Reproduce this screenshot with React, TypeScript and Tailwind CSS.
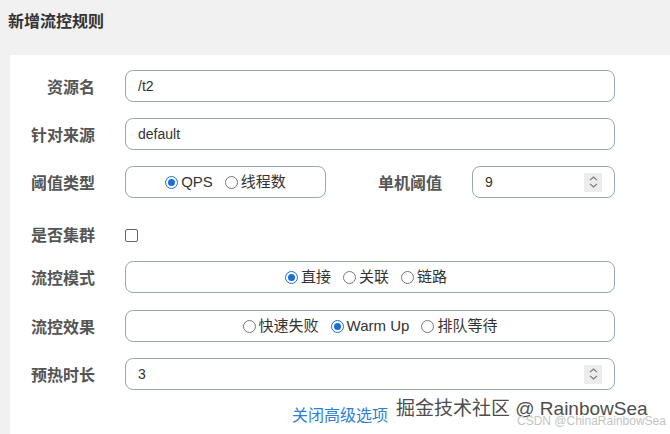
import React from 'react'

const font = { fontFamily: '"Liberation Sans", "Noto Sans CJK SC", sans-serif' }

function Label({ children, className = '' }: { children: React.ReactNode; className?: string }) {
  return (
    <div className={`text-right text-[16px] font-bold text-[#555] leading-none pt-[4px] ${className}`}>{children}</div>
  )
}

function Radio({ checked, label }: { checked?: boolean; label: string }) {
  return (
    <label className="flex items-center gap-[3px]">
      {checked ? (
        <span className="w-[13px] h-[13px] rounded-full border-[1.5px] border-[#1a6fd6] flex items-center justify-center">
          <span className="w-[7px] h-[7px] rounded-full bg-[#1a6fd6]" />
        </span>
      ) : (
        <span className="w-[13px] h-[13px] rounded-full border-[1.5px] border-[#777]" />
      )}
      <span className="text-[15px] text-[#333]">{label}</span>
    </label>
  )
}

function Spinner() {
  return (
    <div className="w-[18px] h-[19px] bg-[#ececec] flex flex-col items-center justify-center gap-[2px]">
      <svg width="9" height="5" viewBox="0 0 9 5" fill="none">
        <path d="M1 4.2 L4.5 1 L8 4.2" stroke="#777" strokeWidth="1.1" />
      </svg>
      <svg width="9" height="5" viewBox="0 0 9 5" fill="none">
        <path d="M1 0.8 L4.5 4 L8 0.8" stroke="#777" strokeWidth="1.1" />
      </svg>
    </div>
  )
}

const box = 'h-8 rounded-[8px] border border-[#93a9b4] bg-white'

export default function App() {
  return (
    <div className="relative w-[670px] h-[434px] overflow-hidden bg-[#f1f1f1]" style={font}>
      {/* Header */}
      <div className="h-[55px] flex items-start pt-[14px] pl-[8px]">
        <h1 className="text-[16px] font-bold text-[#333] leading-[16px]">新增流控规则</h1>
      </div>

      {/* Card */}
      <div className="ml-[10px] bg-white h-[379px] pt-[15px] pr-[55px]">
        <div className="flex items-center">
          <Label className="w-[85px]">资源名</Label>
          <div className={`${box} ml-[30px] flex-1 flex items-center px-3 text-[14px] text-[#333]`}>/t2</div>
        </div>

        <div className="flex items-center mt-4">
          <Label className="w-[85px]">针对来源</Label>
          <div className={`${box} ml-[30px] flex-1 flex items-center px-3 text-[14px] text-[#333]`}>default</div>
        </div>

        <div className="flex items-center mt-4">
          <Label className="w-[85px]">阈值类型</Label>
          <div className={`${box} ml-[30px] w-[201px] flex items-center justify-center gap-3`}>
            <Radio checked label="QPS" />
            <Radio label="线程数" />
          </div>
          <Label className="w-[116px]">单机阈值</Label>
          <div className={`${box} ml-[30px] flex-1 flex items-center justify-between pl-3 pr-[12px] text-[14px] text-[#333]`}>
            <span>9</span>
            <Spinner />
          </div>
        </div>

        <div className="flex items-center mt-[20px] h-8">
          <Label className="w-[85px]">是否集群</Label>
          <span className="ml-[30px] mt-[2px] w-[13px] h-[13px] rounded-[2px] border-[1.5px] border-[#666]" />
        </div>

        <div className="flex items-center mt-[11px]">
          <Label className="w-[85px]">流控模式</Label>
          <div className={`${box} ml-[30px] flex-1 flex items-center justify-center gap-3 pr-2`}>
            <Radio checked label="直接" />
            <Radio label="关联" />
            <Radio label="链路" />
          </div>
        </div>

        <div className="flex items-center mt-[17px]">
          <Label className="w-[85px]">流控效果</Label>
          <div className={`${box} ml-[30px] flex-1 flex items-center justify-center gap-3`}>
            <Radio label="快速失败" />
            <Radio checked label="Warm Up" />
            <Radio label="排队等待" />
          </div>
        </div>

        <div className="flex items-center mt-4">
          <Label className="w-[85px]">预热时长</Label>
          <div className={`${box} ml-[30px] flex-1 flex items-center justify-between pl-3 pr-[12px] text-[14px] text-[#333]`}>
            <span>3</span>
            <Spinner />
          </div>
        </div>

        <div className="mt-[16px] flex justify-center pl-[55px]">
          <a className="text-[16px] text-[#2f7fd0] leading-5">关闭高级选项</a>
        </div>
      </div>

      {/* Watermarks */}
      <div
        className="absolute left-[396px] top-[397px] text-[19px] text-[#4d4d4d] leading-[24px] whitespace-nowrap"
        style={{ textShadow: '0 0 2px #fff, 0 0 2px #fff' }}
      >
        掘金技术社区 @ RainbowSea
      </div>
      <div className="absolute left-[517px] top-[413px] text-[12px] text-[#c4c4c4] leading-[16px] whitespace-nowrap">
        CSDN @ChinaRainbowSea
      </div>
    </div>
  )
}
